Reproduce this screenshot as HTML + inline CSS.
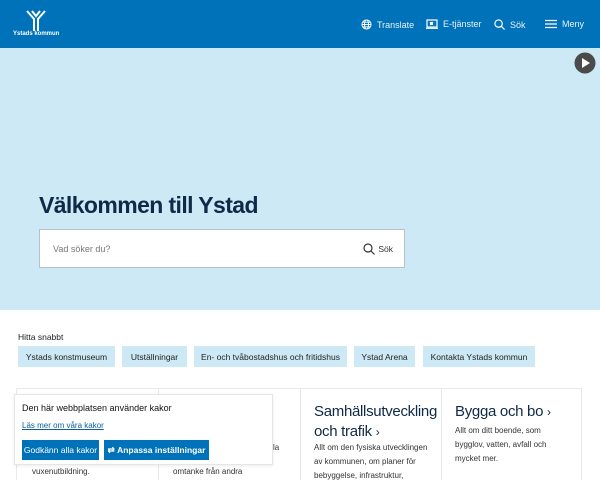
<!DOCTYPE html>
<html><head><meta charset="utf-8"><style>
*{margin:0;padding:0;box-sizing:border-box}
html,body{width:600px;height:480px;overflow:hidden}
body{font-family:"Liberation Sans",sans-serif;background:#fff;position:relative;color:#1d2b3a}
.hdr{position:absolute;left:0;top:0;width:600px;height:48px;background:#0072b9;color:#fff}
.nav{position:absolute;top:19px;font-size:9px;color:#e8f1f8;display:flex;align-items:center;gap:5px}
.hero{position:absolute;left:0;top:48px;width:600px;height:262px;background:#cde9f6}
h1{position:absolute;left:39px;top:192px;font-size:23px;font-weight:bold;color:#0e2a47;letter-spacing:-0.6px}
.search{position:absolute;left:39px;top:229px;width:366px;height:39px;background:#fff;border:1px solid #b5c2cc}
.search .ph{position:absolute;left:13px;top:14px;font-size:9px;color:#777}
.search .s{position:absolute;right:11px;top:13px;font-size:8.5px;color:#333;display:flex;gap:3px;align-items:center}
.hs{position:absolute;left:18px;top:332px;font-size:8.5px;color:#222}
.chip{position:absolute;top:346px;height:21px;background:#cde9f6;font-size:8.5px;color:#222;display:flex;align-items:center;justify-content:center}
.cards{position:absolute;left:16px;top:388px;width:566px;height:100px;border:1px solid #e6e9ec}
.div{position:absolute;top:388px;width:1px;height:100px;background:#e6e9ec}
.ct{position:absolute;font-size:15px;color:#0e2a47;line-height:20px;letter-spacing:-0.3px}
.cp{position:absolute;font-size:8px;color:#333;line-height:14px}
.ck{position:absolute;left:14px;top:394px;width:259px;height:71px;background:#fff;border:1px solid #e3e6ea;box-shadow:0 1px 3px rgba(0,0,0,.08)}
.btn{position:absolute;top:45px;height:20px;background:#0072b9;color:#fff;font-size:8.5px;display:flex;align-items:center;justify-content:center}
</style></head><body>
<div class="hdr">
 <svg style="position:absolute;left:25px;top:10px" width="22" height="22" viewBox="0 0 22 22"><g stroke="#fff" stroke-width="2" fill="none"><path d="M2 1 L9 9 L9 21"/><path d="M20 1 L13 9 L13 21"/><path d="M7 1 L11 6 L15 1"/></g></svg>
 <div style="position:absolute;left:13px;top:31px;font-size:6px;font-weight:bold;color:#fff">Ystads kommun</div>
 <div class="nav" style="left:361px"><svg width="11" height="11" viewBox="0 0 12 12" fill="none" stroke="#fff" stroke-width="1"><circle cx="6" cy="6" r="5"/><ellipse cx="6" cy="6" rx="2.2" ry="5"/><path d="M1 6h10M2 3.5h8M2 8.5h8"/></svg>Translate</div>
 <div class="nav" style="left:426px"><svg width="12" height="10" viewBox="0 0 12 10" fill="none" stroke="#fff" stroke-width="1.2"><rect x="1" y="1" width="10" height="7"/><path d="M0 9.3h12"/><rect x="4.5" y="3.5" width="2" height="2" fill="#fff"/></svg>E-tjänster</div>
 <div class="nav" style="left:494px"><svg width="11" height="11" viewBox="0 0 12 12" fill="none" stroke="#fff" stroke-width="1.3"><circle cx="5" cy="5" r="4"/><path d="M8 8l3.5 3.5"/></svg>Sök</div>
 <div class="nav" style="left:545px"><svg width="12" height="10" viewBox="0 0 12 10" stroke="#fff" stroke-width="1.3"><path d="M0 1.5h12M0 5h12M0 8.5h12"/></svg>Meny</div>
</div>
<div class="hero"></div>
<svg style="position:absolute;left:574px;top:52px" width="22" height="22" viewBox="0 0 22 22"><circle cx="11" cy="11" r="10.5" fill="#4a4a4a"/><path d="M8 6l8 5-8 5z" fill="#fff"/></svg>
<h1>Välkommen till Ystad</h1>
<div class="search"><div class="ph">Vad söker du?</div><div class="s"><svg width="12" height="12" viewBox="0 0 12 12" fill="none" stroke="#333" stroke-width="1.2"><circle cx="5" cy="5" r="4"/><path d="M8 8l3.5 3.5"/></svg>Sök</div></div>
<div class="hs">Hitta snabbt</div>
<div class="chip" style="left:18px;width:97px">Ystads konstmuseum</div>
<div class="chip" style="left:122px;width:65px">Utställningar</div>
<div class="chip" style="left:194px;width:153px">En- och tvåbostadshus och fritidshus</div>
<div class="chip" style="left:354px;width:61px">Ystad Arena</div>
<div class="chip" style="left:423px;width:112px">Kontakta Ystads kommun</div>
<div class="cards"></div>
<div class="div" style="left:158px"></div><div class="div" style="left:300px"></div><div class="div" style="left:441px"></div>
<div class="cp" style="left:32px;top:465px">vuxenutbildning.</div>
<div class="cp" style="left:173px;top:465px">omtanke från andra</div>
<div class="cp" style="left:273px;top:441px">la</div>
<div class="ct" style="left:314px;top:402px">Samhällsutveckling<br>och trafik <span style="font-size:12px">›</span></div>
<div class="cp" style="left:314px;top:441px">Allt om den fysiska utvecklingen<br>av kommunen, om planer för<br>bebyggelse, infrastruktur,</div>
<div class="ct" style="left:455px;top:402px">Bygga och bo <span style="font-size:12px">›</span></div>
<div class="cp" style="left:455px;top:424px">Allt om ditt boende, som<br>bygglov, vatten, avfall och<br>mycket mer.</div>
<div class="ck">
 <div style="position:absolute;left:7px;top:8px;font-size:9px;color:#111">Den här webbplatsen använder kakor</div>
 <div style="position:absolute;left:7px;top:26px;font-size:8px;color:#0b5e9a;text-decoration:underline">Läs mer om våra kakor</div>
 <div class="btn" style="left:7px;width:77px">Godkänn alla kakor</div>
 <div class="btn" style="left:89px;width:105px;font-weight:bold">⇄&nbsp;Anpassa inställningar</div>
</div>
</body></html>
